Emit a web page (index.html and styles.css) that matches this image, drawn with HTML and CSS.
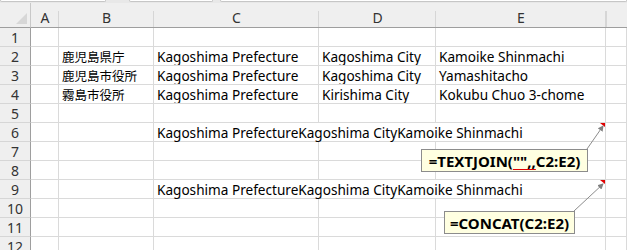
FILE: index.html
```html
<!DOCTYPE html>
<html lang="ja">
<head>
  <meta charset="UTF-8" />
  <meta name="viewport" content="width=device-width, initial-scale=1" />
  <title>Book1 - Sheet1</title>
  <link rel="stylesheet" href="styles.css">
</head>
<body>
  <div class="toolbar">
    <div class="box name-box"></div>
    <div class="box func-box"></div>
    <div class="box formula-box"></div>
  </div>

  <div class="sheet">
    <!-- column headers -->
    <div class="corner"><span class="select-all"></span></div>
    <div class="col-head">A</div>
    <div class="col-head">B</div>
    <div class="col-head">C</div>
    <div class="col-head">D</div>
    <div class="col-head">E</div>
    <div class="col-head last"></div>

    <div class="row-head">1</div>
    <div class="cell"></div><div class="cell"></div><div class="cell"></div><div class="cell"></div><div class="cell"></div><div class="cell"></div>

    <div class="row-head">2</div>
    <div class="cell"></div>
    <div class="cell jp">鹿児島県庁</div>
    <div class="cell">Kagoshima Prefecture</div>
    <div class="cell">Kagoshima City</div>
    <div class="cell">Kamoike Shinmachi</div>
    <div class="cell"></div>

    <div class="row-head">3</div>
    <div class="cell"></div>
    <div class="cell jp">鹿児島市役所</div>
    <div class="cell">Kagoshima Prefecture</div>
    <div class="cell">Kagoshima City</div>
    <div class="cell">Yamashitacho</div>
    <div class="cell"></div>

    <div class="row-head">4</div>
    <div class="cell"></div>
    <div class="cell jp">霧島市役所</div>
    <div class="cell">Kagoshima Prefecture</div>
    <div class="cell">Kirishima City</div>
    <div class="cell">Kokubu Chuo 3-chome</div>
    <div class="cell"></div>

    <div class="row-head">5</div>
    <div class="cell"></div><div class="cell"></div><div class="cell"></div><div class="cell"></div><div class="cell"></div><div class="cell"></div>

    <div class="row-head">6</div>
    <div class="cell"></div>
    <div class="cell"></div>
    <div class="cell overflow has-note">Kagoshima PrefectureKagoshima CityKamoike Shinmachi</div>
    <div class="cell"></div>

    <div class="row-head">7</div>
    <div class="cell"></div><div class="cell"></div><div class="cell"></div><div class="cell"></div><div class="cell"></div><div class="cell"></div>

    <div class="row-head">8</div>
    <div class="cell"></div><div class="cell"></div><div class="cell"></div><div class="cell"></div><div class="cell"></div><div class="cell"></div>

    <div class="row-head">9</div>
    <div class="cell"></div>
    <div class="cell"></div>
    <div class="cell overflow has-note">Kagoshima PrefectureKagoshima CityKamoike Shinmachi</div>
    <div class="cell"></div>

    <div class="row-head">10</div>
    <div class="cell"></div><div class="cell"></div><div class="cell"></div><div class="cell"></div><div class="cell"></div><div class="cell"></div>

    <div class="row-head">11</div>
    <div class="cell"></div><div class="cell"></div><div class="cell"></div><div class="cell"></div><div class="cell"></div><div class="cell"></div>

    <div class="row-head">12</div>
    <div class="cell"></div><div class="cell"></div><div class="cell"></div><div class="cell"></div><div class="cell"></div><div class="cell"></div>

    <!-- notes shown on the sheet, with their leader lines -->
    <svg class="leaders" width="627" height="250">
      <defs>
        <marker id="tip" markerWidth="6" markerHeight="6" refX="5" refY="3" orient="auto">
          <path d="M0,0 L6,3 L0,6 z" fill="#808080" />
        </marker>
      </defs>
      <line x1="587" y1="149" x2="603" y2="126" stroke="#8c8c8c" stroke-width="1" marker-end="url(#tip)" />
      <line x1="574" y1="211" x2="603" y2="184" stroke="#8c8c8c" stroke-width="1" marker-end="url(#tip)" />
    </svg>
    <div class="note textjoin">=TEXTJOIN(<span class="squiggle">"",,</span>C2:E2)</div>
    <div class="note concat">=CONCAT(C2:E2)</div>
  </div>
</body>
</html>
```

FILE: styles.css
```css
body {
  margin: 0;
  background-color: #fff;
  font-family: "Noto Sans", "Noto Sans CJK JP", sans-serif;
  overflow: hidden;
}

/* strip left over from the formula bar */
.toolbar {
  display: flex;
  height: 3px;
  background-color: #e8e8e8;
}

.toolbar .box {
  background-color: #fff;
  border: 1px solid #c6c6c6;
  border-top: none;
  border-radius: 0 0 3px 3px;
  height: 1px;
}

.name-box {
  width: 104px;
}

.func-box {
  width: 82px;
  margin-left: 23px;
}

.formula-box {
  flex: 1;
  margin-left: 7px;
}

.sheet {
  position: relative;
  display: grid;
  grid-template-columns: 31px 28px 95px 165px 117px 170px 1fr;
  grid-template-rows: 25px repeat(12, 19px);
  font-size: 13.6px;
  color: #000;
}

.corner,
.col-head {
  background-color: #efefef;
  border-bottom: 1px solid #9e9e9e;
  box-sizing: border-box;
}

.corner {
  display: flex;
  align-items: flex-end;
  justify-content: flex-end;
  border-right: 1px solid #c8c8c8;
  padding: 0 3px 3px 0;
}

.select-all {
  width: 0;
  height: 0;
  border-left: 11px solid transparent;
  border-bottom: 11px solid #d7d7d7;
}

.col-head {
  display: flex;
  align-items: center;
  justify-content: center;
  padding-top: 4px;
  color: #333;
  font-size: 14px;
  background: linear-gradient(#d6d6d6, #d6d6d6) right bottom / 1px 16px no-repeat, #efefef;
}

.col-head.last {
  background: linear-gradient(#d6d6d6, #d6d6d6) left bottom / 1px 16px no-repeat, #efefef;
}

.row-head {
  display: flex;
  align-items: center;
  justify-content: center;
  background-color: #efefef;
  border-right: 1px solid #9e9e9e;
  border-bottom: 1px solid #d6d6d6;
  box-sizing: border-box;
  color: #333;
  font-size: 14px;
}

.cell {
  display: flex;
  align-items: center;
  padding-left: 3px;
  border-right: 1px solid #dadada;
  border-bottom: 1px solid #dadada;
  box-sizing: border-box;
  white-space: nowrap;
  overflow: hidden;
}

.cell.jp {
  font-size: 12.5px;
}

.cell.overflow {
  grid-column: span 3;
  position: relative;
  overflow: visible;
}

/* red corner mark for a cell with a note */
.has-note::after {
  content: "";
  position: absolute;
  top: 0;
  right: 0;
  border-top: 4px solid #e00000;
  border-left: 5px solid transparent;
}

.leaders {
  position: absolute;
  left: 0;
  top: -3px;
  pointer-events: none;
}

.note {
  position: absolute;
  box-sizing: border-box;
  display: flex;
  align-items: center;
  justify-content: center;
  background-color: #ffffe1;
  border: 1px solid #8c8c8c;
  font-weight: bold;
  font-size: 15px;
}

.textjoin {
  left: 421px;
  top: 146px;
  width: 167px;
  height: 23px;
}

.concat {
  left: 444px;
  top: 208px;
  width: 131px;
  height: 23px;
}

.squiggle {
  text-decoration: underline;
  text-decoration-color: #e00000;
  text-underline-offset: 2px;
}
```
